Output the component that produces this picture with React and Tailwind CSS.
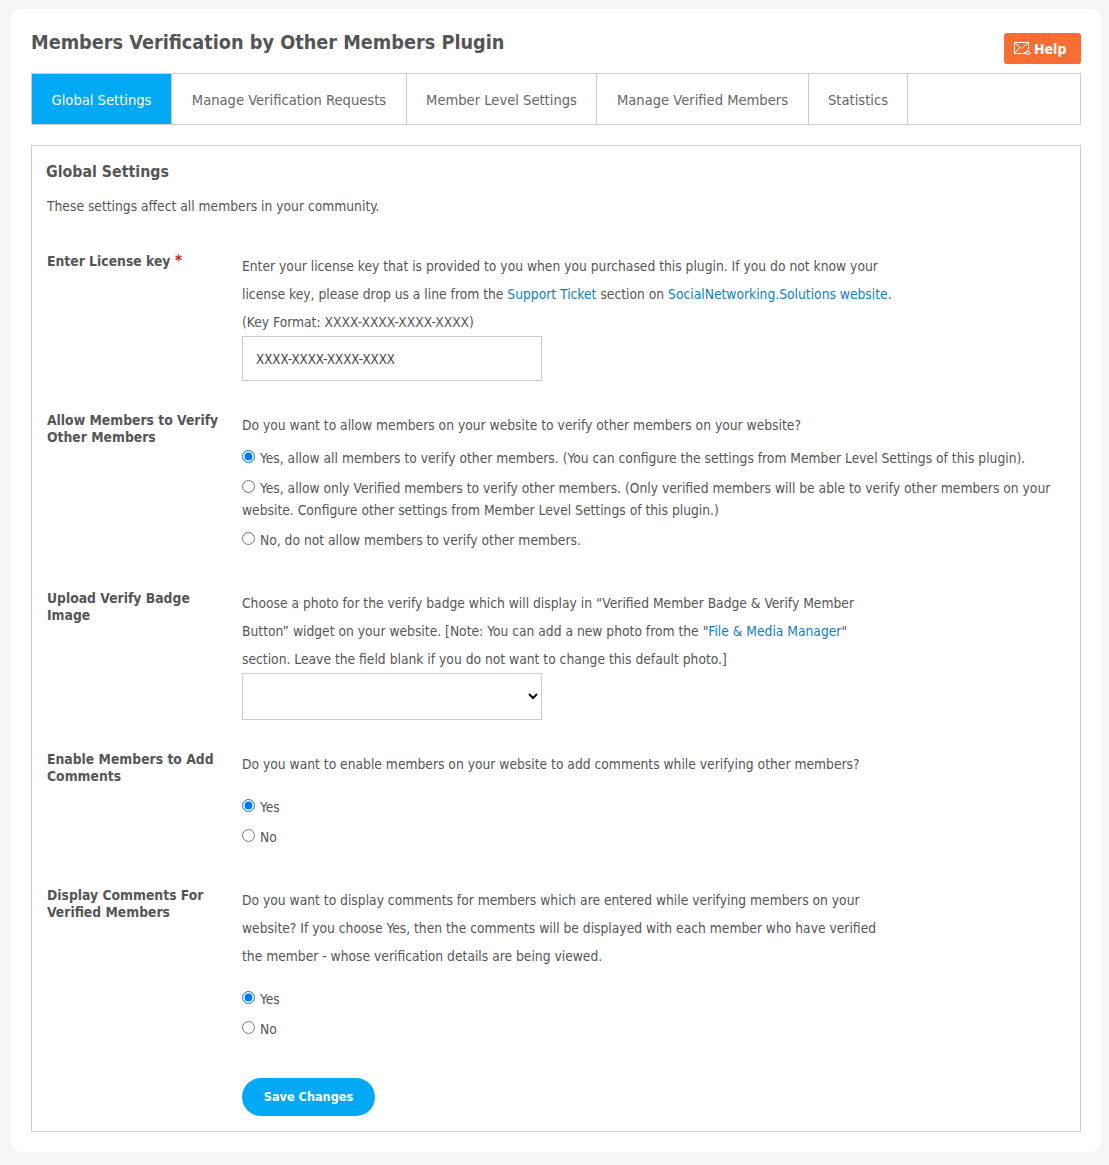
const F = "font-['DejaVu_Sans_Condensed','Liberation_Sans',sans-serif]";

function Radio({ name, checked, children }) {
  return (
    <label className="block">
      <input type="radio" name={name} defaultChecked={checked} className="mr-[5px] ml-0 my-0 align-[0px] w-[13px] h-[13px]" />
      {children}
    </label>
  );
}

function Row({ label, req, children, className }) {
  return (
    <div className={"flex " + className}>
      <div className="w-[195px] shrink-0 pr-[10px] text-[13.8px] leading-[17px] font-bold text-[#555]">
        {label}
        {req && <span className="text-[#d92020] text-[15px] leading-none"> *</span>}
      </div>
      <div className="flex-1 min-w-0 mt-[-1px]">{children}</div>
    </div>
  );
}

const A = ({ children }) => <a className="text-[#0d7fc4]">{children}</a>;

const TABS = [
  ["Manage Verification Requests", "w-[235px]"],
  ["Member Level Settings", "w-[190px]"],
  ["Manage Verified Members", "w-[212px]"],
  ["Statistics", "w-[99px]"],
];

export default function App() {
  return (
    <div className={"bg-[#f5f5f5] h-[1165px] pt-[9px] pl-[11px] pr-[8px] text-[13.73px] text-[#555] " + F}>
      <div className="bg-white rounded-[10px] h-[1143px] px-[20px] pt-[21px]">
        <div className="flex justify-between items-start h-[43px]">
          <h1 className="text-[19.7px] leading-[26px] font-bold text-[#555]">Members Verification by Other Members Plugin</h1>
          <button className="mt-[3px] h-[31px] w-[77px] bg-[#f76d34] rounded-[3px] text-white font-bold text-[14px] flex items-center justify-start pl-[10px] gap-[3px]">
            <svg width="17" height="13" viewBox="0 0 17 13" fill="none" stroke="#fff" strokeWidth="1">
              <path d="M.5.5h14v7M.5.5v11h9M.5.5l7 6 7-6M.5 11.5l5-6" />
              <path d="M10 10.5h3V8l3.5 3-3.5 2v-1.500h-3z" />
            </svg>
            <span className="pt-[1px]">Help</span>
          </button>
        </div>
        <div className="flex h-[52px] border border-[#ccc]">
          <div className="w-[140px] bg-[#03a9f4] text-white pt-[2px] flex items-center justify-center border-r border-[#ccc] text-[14.6px]">Global Settings</div>
          {TABS.map(([t, w]) => (
            <div key={t} className={w + " pt-[2px] flex items-center justify-center border-r border-[#ccc] text-[14.6px] text-[#666]"}>{t}</div>
          ))}
        </div>
        <div className="mt-[20px] h-[987px] border border-[#ccc] px-[15px] pt-[15px]">
          <h2 className="text-[15.8px] leading-[22px] font-bold text-[#555] ml-[-1px]">Global Settings</h2>
          <p className="mt-[13px] leading-[20px]">These settings affect all members in your community.</p>

          <Row label="Enter License key" req className="mt-[37px]">
            <div className="leading-[28px] max-w-[660px]">
              Enter your license key that is provided to you when you purchased this plugin. If you do not know your license key, please drop us a line from the <A>Support Ticket</A> section on <A>SocialNetworking.Solutions website</A>.
              <br />(Key Format: XXXX-XXXX-XXXX-XXXX)
            </div>
            <input readOnly value="XXXX-XXXX-XXXX-XXXX" className="block mt-0 w-[300px] h-[45px] border border-[#ccc] px-[13px] pt-[2px] text-[#444] text-[13.2px] outline-none" />
          </Row>

          <Row label="Allow Members to Verify Other Members" className="mt-[31px]">
            <div className="leading-[28px]">Do you want to allow members on your website to verify other members on your website?</div>
            <div className="mt-[8px] leading-[22px] flex flex-col gap-[8px]">
              <Radio name="a" checked>Yes, allow all members to verify other members. (You can configure the settings from Member Level Settings of this plugin).</Radio>
              <Radio name="a">Yes, allow only Verified members to verify other members. (Only verified members will be able to verify other members on your website. Configure other settings from Member Level Settings of this plugin.)</Radio>
              <Radio name="a">No, do not allow members to verify other members.</Radio>
            </div>
          </Row>

          <Row label="Upload Verify Badge Image" className="mt-[39px]">
            <div className="leading-[28px] max-w-[640px]">
              Choose a photo for the verify badge which will display in “Verified Member Badge &amp; Verify Member Button” widget on your website. [Note: You can add a new photo from the "<A>File &amp; Media Manager</A>" section. Leave the field blank if you do not want to change this default photo.]
            </div>
            <select className="block w-[300px] h-[47px] border border-[#ccc] bg-white mt-0 text-black"><option></option></select>
          </Row>

          <Row label="Enable Members to Add Comments" className="mt-[31px]">
            <div className="leading-[28px]">Do you want to enable members on your website to add comments while verifying other members?</div>
            <div className="mt-[18px] leading-[22px] flex flex-col gap-[8px]">
              <Radio name="b" checked>Yes</Radio>
              <Radio name="b">No</Radio>
            </div>
          </Row>

          <Row label="Display Comments For Verified Members" className="mt-[39px]">
            <div className="leading-[28px] max-w-[650px]">
              Do you want to display comments for members which are entered while verifying members on your website? If you choose Yes, then the comments will be displayed with each member who have verified the member - whose verification details are being viewed.
            </div>
            <div className="mt-[18px] leading-[22px] flex flex-col gap-[8px]">
              <Radio name="c" checked>Yes</Radio>
              <Radio name="c">No</Radio>
            </div>
            <button className="mt-[38px] block w-[133px] h-[38px] rounded-full bg-[#03a9f4] text-white font-bold text-[12.6px]">Save Changes</button>
          </Row>
        </div>
      </div>
    </div>
  );
}
